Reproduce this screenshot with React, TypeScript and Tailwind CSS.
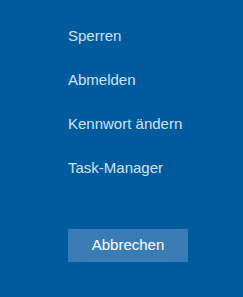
export default function App() {
  const items = ['Sperren', 'Abmelden', 'Kennwort ändern', 'Task-Manager'];

  return (
    <div className="w-[243px] h-[297px] bg-[#005a9e] pl-[68px] pt-[14px] font-['Liberation_Sans',Arial,sans-serif] overflow-hidden">
      <ul className="flex flex-col">
        {items.map(label => (
          <li key={label} className="h-[44px] flex items-center text-[15px] text-[#d3e3f0]">
            {label}
          </li>
        ))}
      </ul>
      <button className="mt-[39px] w-[120px] h-[33px] bg-[#3a7bb3] text-white text-[15px] flex items-center justify-center">
        Abbrechen
      </button>
    </div>
  );
}
